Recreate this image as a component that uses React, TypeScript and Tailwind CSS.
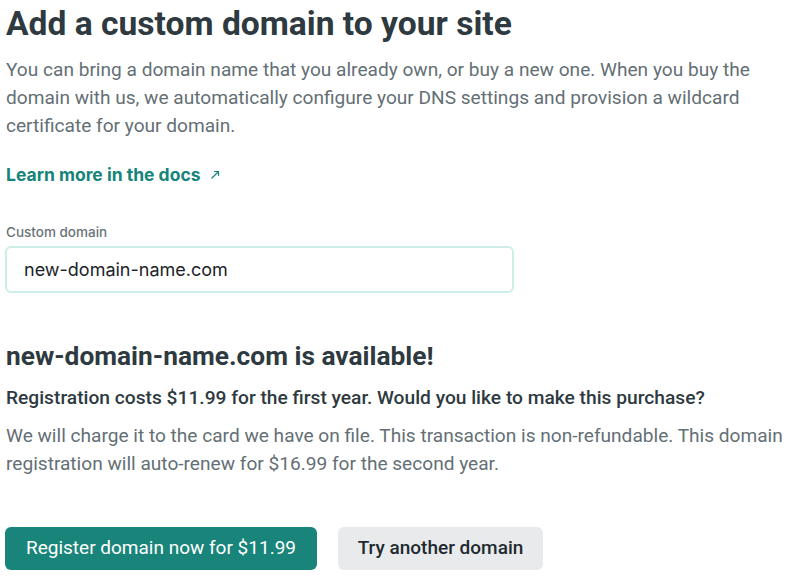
import React, { useState } from 'react';

export default function App() {
    const [domain, setDomain] = useState('new-domain-name.com');

    return (
        <div className="bg-white w-[811px] h-[578px] overflow-hidden pl-[6px] pr-2 text-[#2e3a40] font-['Roboto','Liberation_Sans',sans-serif]">
            <h1 className="text-[33.6px] font-bold leading-[42px] pt-[3px]">Add a custom domain to your site</h1>
            <p className="mt-[11px] text-[19.1px] leading-[28px] text-[#646f75]">
                You can bring a domain name that you already own, or buy a new one. When you buy the domain with us, we automatically configure your DNS settings and provision a wildcard certificate for your domain.
            </p>

            <a href="#" className="mt-[21px] inline-flex items-center gap-[10px] text-[17.5px] leading-[28px] font-bold text-[#15847a] font-['Inter','Roboto',sans-serif]">
                Learn more in the docs
                <svg width="10" height="10" viewBox="0 0 10 10" fill="none" stroke="currentColor" strokeWidth="1.2">
                    <path d="M1.5 8.5 L8.5 1.5 M4 1.5 H8.5 V6" />
                </svg>
            </a>

            <section className="mt-[35px]">
                <label htmlFor="custom-domain" className="block text-[13.5px] leading-[16px] text-[#6b7378] font-medium font-['Inter','Roboto',sans-serif]">Custom domain</label>
                <input
                    id="custom-domain"
                    value={domain}
                    onChange={e => setDomain(e.target.value)}
                    className="mt-[6px] block w-[509px] h-[47px] -ml-[1px] rounded-[6px] border-2 border-[#cdeee8] px-[17px] text-[18px] text-[#1b2329] font-['Inter','Roboto',sans-serif] outline-none"
                />
            </section>

            <h2 className="mt-[47px] text-[26.3px] font-bold leading-[32px]">{domain} is available!</h2>
            <p className="mt-[12px] text-[19.2px] leading-[28px] font-medium">
                Registration costs $11.99 for the first year. Would you like to make this purchase?
            </p>
            <p className="mt-[10px] text-[19.1px] leading-[28px] text-[#646f75]">
                We will charge it to the card we have on file. This transaction is non-refundable. This domain registration will auto-renew for $16.99 for the second year.
            </p>

            <div className="mt-[49px] flex gap-[21px]">
                <button className="h-[43px] w-[312px] -ml-[1px] rounded-[6px] bg-[#19857a] text-white text-[19px]">Register domain now for $11.99</button>
                <button className="h-[43px] w-[205px] rounded-[6px] bg-[#e9eaec] text-[#1f2a30] text-[19px] font-medium">Try another domain</button>
            </div>
        </div>
    );
}
